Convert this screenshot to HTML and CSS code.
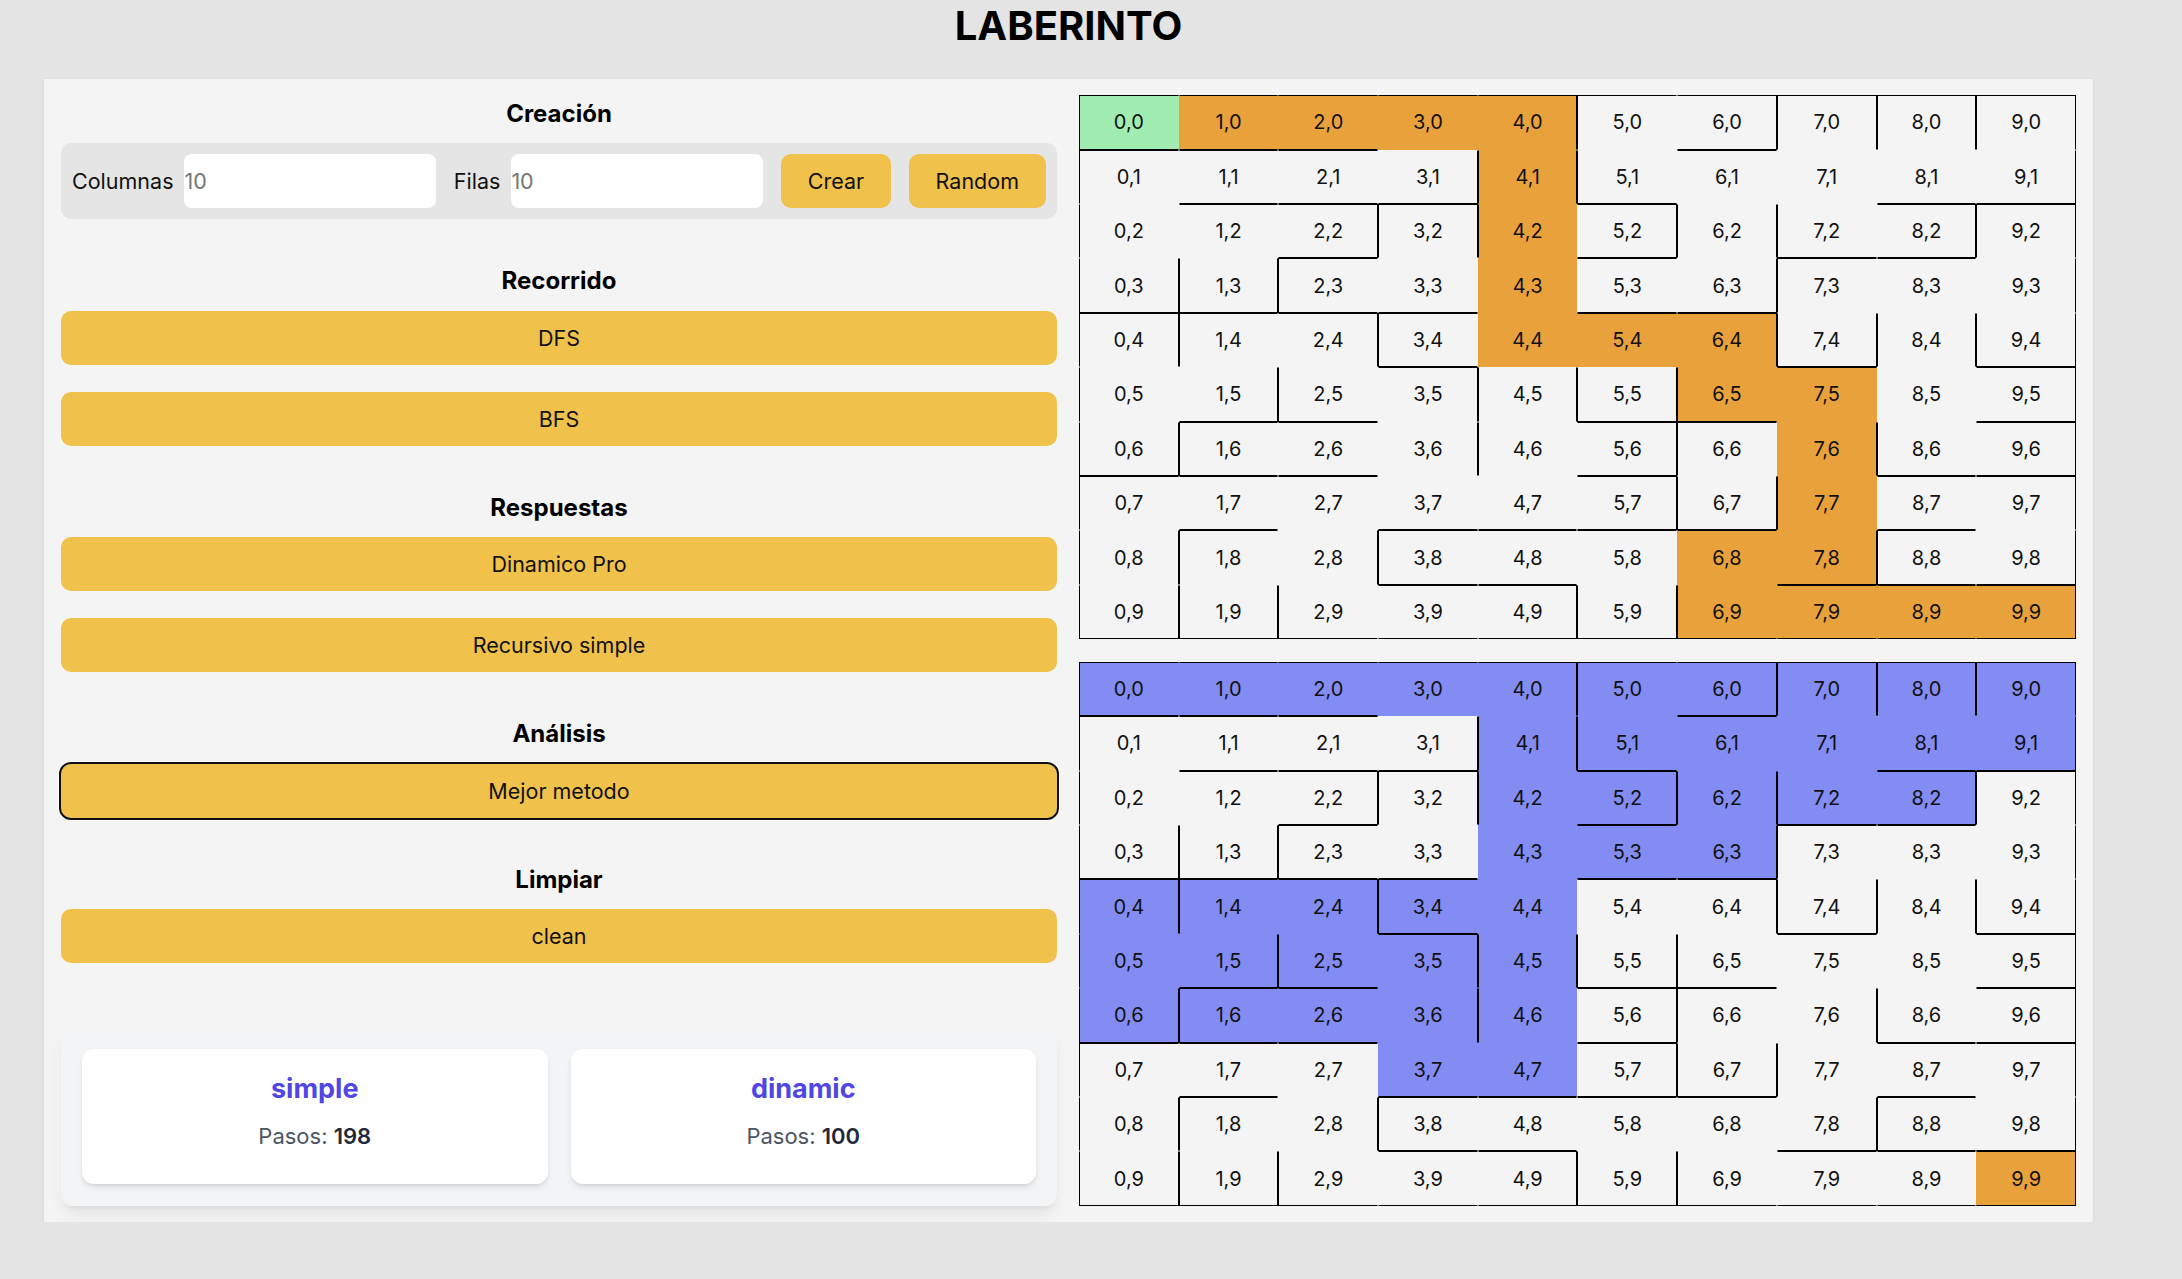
FILE: index.html
```html
<!DOCTYPE html>
<html lang="es">
<head>
<meta charset="utf-8">
<title>Laberinto</title>
<link rel="stylesheet" href="styles.css">
</head>
<body>
<div class="page">
  <h1 class="title">LABERINTO</h1>
  <main class="panel">
    <section class="controls">
      <div class="section">
        <h3 class="sec-title">Creación</h3>
        <div class="create-row">
          <label class="lbl" for="cols">Columnas</label>
          <input class="num" id="cols" type="text" placeholder="10">
          <label class="lbl" for="rows">Filas</label>
          <input class="num" id="rows" type="text" placeholder="10">
          <button class="btn">Crear</button>
          <button class="btn">Random</button>
        </div>
      </div>
      <div class="section">
        <h3 class="sec-title">Recorrido</h3>
        <button class="btn wide">DFS</button>
        <button class="btn wide">BFS</button>
      </div>
      <div class="section">
        <h3 class="sec-title">Respuestas</h3>
        <button class="btn wide">Dinamico Pro</button>
        <button class="btn wide">Recursivo simple</button>
      </div>
      <div class="section">
        <h3 class="sec-title">Análisis</h3>
        <button class="btn wide focused">Mejor metodo</button>
      </div>
      <div class="section">
        <h3 class="sec-title">Limpiar</h3>
        <button class="btn wide">clean</button>
      </div>
      <div class="results">
        <div class="card">
          <h4 class="card-title">simple</h4>
          <p class="card-text">Pasos: <strong>198</strong></p>
        </div>
        <div class="card">
          <h4 class="card-title">dinamic</h4>
          <p class="card-text">Pasos: <strong>100</strong></p>
        </div>
      </div>
    </section>

    <section class="mazes">
      <div class="maze">
        <div class="cell wt wb wl start">0,0</div>
        <div class="cell wt wb path">1,0</div>
        <div class="cell wt wb path">2,0</div>
        <div class="cell wt path">3,0</div>
        <div class="cell wt wr path">4,0</div>
        <div class="cell wt wl">5,0</div>
        <div class="cell wt wr wb">6,0</div>
        <div class="cell wt wr wl">7,0</div>
        <div class="cell wt wr wl">8,0</div>
        <div class="cell wt wr wl">9,0</div>

        <div class="cell wt wl">0,1</div>
        <div class="cell wt wb">1,1</div>
        <div class="cell wt wb">2,1</div>
        <div class="cell wr wb">3,1</div>
        <div class="cell wr wl path">4,1</div>
        <div class="cell wb wl">5,1</div>
        <div class="cell wt">6,1</div>
        <div class="cell">7,1</div>
        <div class="cell wb">8,1</div>
        <div class="cell wr wb">9,1</div>

        <div class="cell wl">0,2</div>
        <div class="cell wt">1,2</div>
        <div class="cell wt wr wb">2,2</div>
        <div class="cell wt wr wl">3,2</div>
        <div class="cell wl path">4,2</div>
        <div class="cell wt wr wb">5,2</div>
        <div class="cell wr wl">6,2</div>
        <div class="cell wb wl">7,2</div>
        <div class="cell wt wr wb">8,2</div>
        <div class="cell wt wr wl">9,2</div>

        <div class="cell wr wb wl">0,3</div>
        <div class="cell wr wb wl">1,3</div>
        <div class="cell wt wb wl">2,3</div>
        <div class="cell wb">3,3</div>
        <div class="cell path">4,3</div>
        <div class="cell wt wb">5,3</div>
        <div class="cell wr wb">6,3</div>
        <div class="cell wt wl">7,3</div>
        <div class="cell wt">8,3</div>
        <div class="cell wr">9,3</div>

        <div class="cell wt wr wl">0,4</div>
        <div class="cell wt wl">1,4</div>
        <div class="cell wt wr">2,4</div>
        <div class="cell wt wb wl">3,4</div>
        <div class="cell path">4,4</div>
        <div class="cell wt path">5,4</div>
        <div class="cell wt wr path">6,4</div>
        <div class="cell wr wb wl">7,4</div>
        <div class="cell wr wl">8,4</div>
        <div class="cell wr wb wl">9,4</div>

        <div class="cell wl">0,5</div>
        <div class="cell wr wb">1,5</div>
        <div class="cell wb wl">2,5</div>
        <div class="cell wt wr">3,5</div>
        <div class="cell wr wl">4,5</div>
        <div class="cell wr wb wl">5,5</div>
        <div class="cell wb wl path">6,5</div>
        <div class="cell wt path">7,5</div>
        <div class="cell">8,5</div>
        <div class="cell wt wr wb">9,5</div>

        <div class="cell wr wb wl">0,6</div>
        <div class="cell wt wb wl">1,6</div>
        <div class="cell wt wb">2,6</div>
        <div class="cell wr">3,6</div>
        <div class="cell wl">4,6</div>
        <div class="cell wt wr wb">5,6</div>
        <div class="cell wt wl">6,6</div>
        <div class="cell wr path">7,6</div>
        <div class="cell wb wl">8,6</div>
        <div class="cell wt wr wb">9,6</div>

        <div class="cell wt wl">0,7</div>
        <div class="cell wt wb">1,7</div>
        <div class="cell wt">2,7</div>
        <div class="cell wb">3,7</div>
        <div class="cell wb">4,7</div>
        <div class="cell wt wr wb">5,7</div>
        <div class="cell wr wb wl">6,7</div>
        <div class="cell wl path">7,7</div>
        <div class="cell wt wb">8,7</div>
        <div class="cell wt wr">9,7</div>

        <div class="cell wr wl">0,8</div>
        <div class="cell wt wl">1,8</div>
        <div class="cell wr">2,8</div>
        <div class="cell wt wb wl">3,8</div>
        <div class="cell wt wb">4,8</div>
        <div class="cell wt">5,8</div>
        <div class="cell wt path">6,8</div>
        <div class="cell wr wb path">7,8</div>
        <div class="cell wt wb wl">8,8</div>
        <div class="cell wr wb">9,8</div>

        <div class="cell wr wb wl">0,9</div>
        <div class="cell wr wb wl">1,9</div>
        <div class="cell wb wl">2,9</div>
        <div class="cell wt wb">3,9</div>
        <div class="cell wt wr wb">4,9</div>
        <div class="cell wr wb wl">5,9</div>
        <div class="cell wb wl path">6,9</div>
        <div class="cell wt wb path">7,9</div>
        <div class="cell wt wb path">8,9</div>
        <div class="cell wt wr wb path">9,9</div>
      </div>

      <div class="maze">
        <div class="cell wt wb wl seen">0,0</div>
        <div class="cell wt wb seen">1,0</div>
        <div class="cell wt wb seen">2,0</div>
        <div class="cell wt seen">3,0</div>
        <div class="cell wt wr seen">4,0</div>
        <div class="cell wt wl seen">5,0</div>
        <div class="cell wt wr wb seen">6,0</div>
        <div class="cell wt wr wl seen">7,0</div>
        <div class="cell wt wr wl seen">8,0</div>
        <div class="cell wt wr wl seen">9,0</div>

        <div class="cell wt wl">0,1</div>
        <div class="cell wt wb">1,1</div>
        <div class="cell wt wb">2,1</div>
        <div class="cell wr wb">3,1</div>
        <div class="cell wr wl seen">4,1</div>
        <div class="cell wb wl seen">5,1</div>
        <div class="cell wt seen">6,1</div>
        <div class="cell seen">7,1</div>
        <div class="cell wb seen">8,1</div>
        <div class="cell wr wb seen">9,1</div>

        <div class="cell wl">0,2</div>
        <div class="cell wt">1,2</div>
        <div class="cell wt wr wb">2,2</div>
        <div class="cell wt wr wl">3,2</div>
        <div class="cell wl seen">4,2</div>
        <div class="cell wt wr wb seen">5,2</div>
        <div class="cell wr wl seen">6,2</div>
        <div class="cell wb wl seen">7,2</div>
        <div class="cell wt wr wb seen">8,2</div>
        <div class="cell wt wr wl">9,2</div>

        <div class="cell wr wb wl">0,3</div>
        <div class="cell wr wb wl">1,3</div>
        <div class="cell wt wb wl">2,3</div>
        <div class="cell wb">3,3</div>
        <div class="cell seen">4,3</div>
        <div class="cell wt wb seen">5,3</div>
        <div class="cell wr wb seen">6,3</div>
        <div class="cell wt wl">7,3</div>
        <div class="cell wt">8,3</div>
        <div class="cell wr">9,3</div>

        <div class="cell wt wr wl seen">0,4</div>
        <div class="cell wt wl seen">1,4</div>
        <div class="cell wt wr seen">2,4</div>
        <div class="cell wt wb wl seen">3,4</div>
        <div class="cell seen">4,4</div>
        <div class="cell wt">5,4</div>
        <div class="cell wt wr">6,4</div>
        <div class="cell wr wb wl">7,4</div>
        <div class="cell wr wl">8,4</div>
        <div class="cell wr wb wl">9,4</div>

        <div class="cell wl seen">0,5</div>
        <div class="cell wr wb seen">1,5</div>
        <div class="cell wb wl seen">2,5</div>
        <div class="cell wt wr seen">3,5</div>
        <div class="cell wr wl seen">4,5</div>
        <div class="cell wr wb wl">5,5</div>
        <div class="cell wb wl">6,5</div>
        <div class="cell wt">7,5</div>
        <div class="cell">8,5</div>
        <div class="cell wt wr wb">9,5</div>

        <div class="cell wr wb wl seen">0,6</div>
        <div class="cell wt wb wl seen">1,6</div>
        <div class="cell wt wb seen">2,6</div>
        <div class="cell wr seen">3,6</div>
        <div class="cell wl seen">4,6</div>
        <div class="cell wt wr wb">5,6</div>
        <div class="cell wt wl">6,6</div>
        <div class="cell wr">7,6</div>
        <div class="cell wb wl">8,6</div>
        <div class="cell wt wr wb">9,6</div>

        <div class="cell wt wl">0,7</div>
        <div class="cell wt wb">1,7</div>
        <div class="cell wt">2,7</div>
        <div class="cell wb seen">3,7</div>
        <div class="cell wb seen">4,7</div>
        <div class="cell wt wr wb">5,7</div>
        <div class="cell wr wb wl">6,7</div>
        <div class="cell wl">7,7</div>
        <div class="cell wt wb">8,7</div>
        <div class="cell wt wr">9,7</div>

        <div class="cell wr wl">0,8</div>
        <div class="cell wt wl">1,8</div>
        <div class="cell wr">2,8</div>
        <div class="cell wt wb wl">3,8</div>
        <div class="cell wt wb">4,8</div>
        <div class="cell wt">5,8</div>
        <div class="cell wt">6,8</div>
        <div class="cell wr wb">7,8</div>
        <div class="cell wt wb wl">8,8</div>
        <div class="cell wr wb">9,8</div>

        <div class="cell wr wb wl">0,9</div>
        <div class="cell wr wb wl">1,9</div>
        <div class="cell wb wl">2,9</div>
        <div class="cell wt wb">3,9</div>
        <div class="cell wt wr wb">4,9</div>
        <div class="cell wr wb wl">5,9</div>
        <div class="cell wb wl">6,9</div>
        <div class="cell wt wb">7,9</div>
        <div class="cell wt wb">8,9</div>
        <div class="cell wt wr wb path">9,9</div>
      </div>
    </section>
  </main>
</div>
</body>
</html>
```

FILE: styles.css
```css
* {
  box-sizing: border-box;
}

body {
  margin: 0;
  background: #e4e4e4;
  font-family: Inter, "Noto Sans", "Liberation Sans", sans-serif;
  color: #111;
}

.page {
  width: 2049px;
  margin-left: 44px;
}

.title {
  margin: 0 0 29px;
  padding-top: 2px;
  height: 50px;
  font-size: 40px;
  line-height: 48px;
  font-weight: 700;
  text-align: center;
  color: #000;
}

.panel {
  display: grid;
  grid-template-columns: 996px 997px;
  column-gap: 22px;
  padding: 16.3px 17px 16.7px 17px;
  background: #f4f4f4;
  box-shadow: 0 1px 3px rgba(0, 0, 0, 0.08);
}

/* ---------- left column ---------- */
.controls {
  display: flex;
  flex-direction: column;
  padding-top: 3.7px;
}

.section {
  display: flex;
  flex-direction: column;
}

.section + .section {
  margin-top: 47px;
}

.sec-title {
  margin: 0 0 15.5px;
  font-size: 24px;
  line-height: 29px;
  font-weight: 700;
  text-align: center;
  color: #000;
}

.create-row {
  display: flex;
  align-items: center;
  padding: 11px;
  background: #e5e5e5;
  border-radius: 10px;
}

.lbl {
  margin: 0 11px 0 0;
  font-size: 21.5px;
  color: #111;
}

.num {
  flex: 1 1 0;
  min-width: 0;
  height: 54px;
  margin-right: 17.5px;
  padding: 0;
  border: none;
  border-radius: 8px;
  background: #fff;
  font-family: inherit;
  font-size: 21.5px;
  color: #111;
}

.num::placeholder {
  color: #757575;
}

.btn {
  height: 54px;
  padding: 0 27px;
  border: none;
  border-radius: 10px;
  background: #f0c14b;
  font-family: inherit;
  font-size: 21.5px;
  color: #111;
}

.btn + .btn {
  margin-left: 17.5px;
}

.wide {
  display: block;
  width: 100%;
}

.wide + .wide {
  margin-left: 0;
  margin-top: 27px;
}

.focused {
  outline: 2px solid #101010;
  box-shadow: 0 0 0 3px #fff;
}

.results {
  margin-top: auto;
  display: grid;
  grid-template-columns: 1fr 1fr;
  column-gap: 23px;
  padding: 22px 21px;
  background: #f3f4f6;
  border-radius: 12px;
  box-shadow: 0 10px 15px -3px rgba(0, 0, 0, 0.08), 0 4px 6px -4px rgba(0, 0, 0, 0.08);
}

.card {
  padding: 23px 16px 34px;
  background: #fff;
  border-radius: 12px;
  text-align: center;
  box-shadow: 0 4px 6px -1px rgba(0, 0, 0, 0.1), 0 2px 4px -2px rgba(0, 0, 0, 0.1);
}

.card-title {
  margin: 0 0 18px;
  font-size: 27px;
  line-height: 33px;
  font-weight: 700;
  color: #4f46e5;
}

.card-text {
  margin: 0;
  font-size: 22px;
  line-height: 27px;
  color: #4b5563;
}

.card-text strong {
  font-weight: 600;
  color: #1f2937;
}

/* ---------- mazes ---------- */
.mazes {
  display: flex;
  flex-direction: column;
  gap: 22.5px;
}

.maze {
  display: grid;
  grid-template-columns: repeat(10, 1fr);
  grid-template-rows: repeat(10, 1fr);
  height: 544px;
}

.cell {
  display: flex;
  align-items: center;
  justify-content: center;
  border: 1px solid transparent;
  font-size: 20px;
  color: #111;
}

.wt { border-top-color: #000; }
.wr { border-right-color: #000; }
.wb { border-bottom-color: #000; }
.wl { border-left-color: #000; }

.start { background: #a1ecb1; }
.path { background: #e9a23b; }
.seen { background: #828cf2; }
```
